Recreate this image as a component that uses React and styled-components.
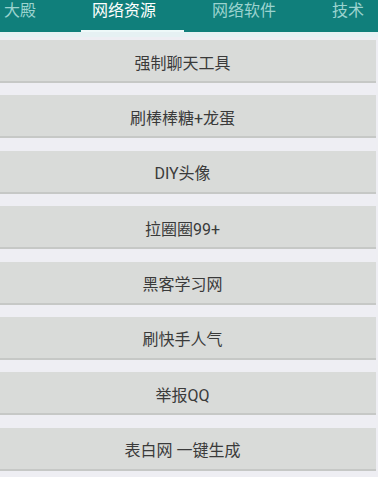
import React from "react";
import styled, { createGlobalStyle } from "styled-components";

const GlobalStyle = createGlobalStyle`
  html, body {
    margin: 0;
    padding: 0;
    background: #eeeef3;
    font-family: Roboto, "Noto Sans CJK SC", "Noto Sans", sans-serif;
  }
`;

const Page = styled.div`
  width: 378px;
  height: 477px;
  overflow: hidden;
  background: #eeeef3;
`;

const TabBar = styled.div`
  display: flex;
  height: 32px;
  background: #107f7b;
  overflow: hidden;
`;

const Tab = styled.div`
  flex: none;
  box-sizing: border-box;
  width: ${({ width }) => width}px;
  padding-left: ${({ pad }) => pad}px;
  padding-top: 2px;
  height: 32px;
  font-size: 16px;
  line-height: 18px;
  white-space: nowrap;
  color: ${({ active }) => (active ? "#ffffff" : "#9bd3cf")};
  border-bottom: 2px solid ${({ active }) => (active ? "#eef9f9" : "transparent")};
`;

const List = styled.div`
  display: flex;
  flex-direction: column;
  gap: 12.4px;
  padding-top: 3px;
  border-top: 5px solid #e6f1f3;
`;

const Item = styled.div`
  box-sizing: border-box;
  height: 43px;
  display: flex;
  align-items: center;
  justify-content: center;
  padding: 2px 11px 0 0;
  margin-right: 2px;
  background: #d9dbd9;
  border-bottom: 2px solid #c6c8c6;
  color: #3a3a3a;
  font-size: 16px;
`;

const tabs = [
  { label: "大殿", width: 81, pad: 4 },
  { label: "网络资源", width: 103, pad: 11, active: true },
  { label: "网络软件", width: 120, pad: 28 },
  { label: "技术", width: 74, pad: 28 },
];

const items = [
  "强制聊天工具",
  "刷棒棒糖+龙蛋",
  "DIY头像",
  "拉圈圈99+",
  "黑客学习网",
  "刷快手人气",
  "举报QQ",
  "表白网 一键生成",
];

export default function App() {
  return (
    <Page>
      <GlobalStyle />
      <TabBar>
        {tabs.map((t) => (
          <Tab key={t.label} width={t.width} pad={t.pad} active={t.active}>
            {t.label}
          </Tab>
        ))}
      </TabBar>
      <List>
        {items.map((label) => (
          <Item key={label}>{label}</Item>
        ))}
      </List>
    </Page>
  );
}
